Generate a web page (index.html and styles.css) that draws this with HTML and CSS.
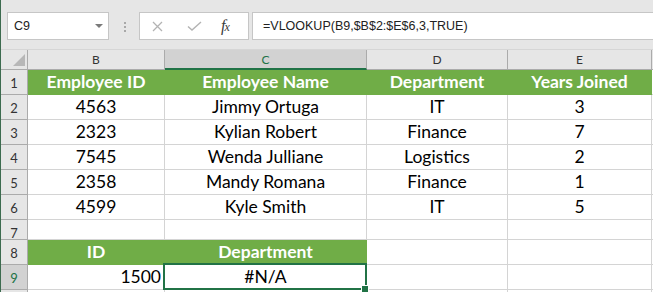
FILE: index.html
```html
<!DOCTYPE html>
<html lang="en">
<head>
<meta charset="utf-8">
<title>Employee lookup</title>
<link rel="stylesheet" href="styles.css">
</head>
<body>
<div class="app">
  <div class="topbar">
    <div class="namebox"><span>C9</span><span class="caret"></span></div>
    <div class="grip"></div>
    <div class="fbuttons">
      <svg class="ico-x" width="11" height="11" viewBox="0 0 11 11"><path d="M1 1L10 10M10 1L1 10" stroke="#b3b3b3" stroke-width="1.3" fill="none"/></svg>
      <svg class="ico-ok" width="15" height="10" viewBox="0 0 15 10"><path d="M1 5.5L5 9L14 1" stroke="#b3b3b3" stroke-width="1.4" fill="none"/></svg>
      <span class="fx"><i>f</i><i class="x">x</i></span>
    </div>
    <div class="finput">=VLOOKUP(B9,$B$2:$E$6,3,TRUE)</div>
  </div>

  <div class="sheet">
    <div class="corner"><svg width="26" height="19" viewBox="0 0 26 19"><path d="M24 4V16H12Z" fill="#b7b7b7"/></svg></div>
    <div class="ch">B</div><div class="ch sel">C</div><div class="ch">D</div><div class="ch">E</div><div class="ch edge"></div>

    <div class="rh">1</div>
    <div class="c head">Employee ID</div><div class="c head">Employee Name</div><div class="c head">Department</div><div class="c head">Years Joined</div><div class="c edge"></div>

    <div class="rh">2</div>
    <div class="c">4563</div><div class="c">Jimmy Ortuga</div><div class="c">IT</div><div class="c">3</div><div class="c edge"></div>

    <div class="rh">3</div>
    <div class="c">2323</div><div class="c">Kylian Robert</div><div class="c">Finance</div><div class="c">7</div><div class="c edge"></div>

    <div class="rh">4</div>
    <div class="c">7545</div><div class="c">Wenda Julliane</div><div class="c">Logistics</div><div class="c">2</div><div class="c edge"></div>

    <div class="rh">5</div>
    <div class="c">2358</div><div class="c">Mandy Romana</div><div class="c">Finance</div><div class="c">1</div><div class="c edge"></div>

    <div class="rh">6</div>
    <div class="c">4599</div><div class="c">Kyle Smith</div><div class="c">IT</div><div class="c">5</div><div class="c edge"></div>

    <div class="rh">7</div>
    <div class="c"></div><div class="c"></div><div class="c"></div><div class="c"></div><div class="c edge"></div>

    <div class="rh">8</div>
    <div class="c head">ID</div><div class="c head">Department</div><div class="c"></div><div class="c"></div><div class="c edge"></div>

    <div class="rh sel">9</div>
    <div class="c num">1500</div><div class="c active">#N/A</div><div class="c"></div><div class="c"></div><div class="c edge"></div>

    <div class="rh"></div>
    <div class="c"></div><div class="c"></div><div class="c"></div><div class="c"></div><div class="c edge"></div>
  </div>
</div>
</body>
</html>
```

FILE: styles.css
```css
html, body {
  margin: 0;
  padding: 0;
}

body {
  width: 653px;
  height: 292px;
  overflow: hidden;
  background: #ffffff;
}

.app {
  height: 292px;
  border-left: 1px solid #3d6b4f;
  overflow: hidden;
}

/* ---------- formula bar ---------- */
.topbar {
  height: 50px;
  box-sizing: border-box;
  background: #e6e6e6;
  border-bottom: 1px solid #d6d6d6;
  display: flex;
  align-items: flex-start;
  padding: 12px 0 0 6px;
  overflow: hidden;
  font-family: "Liberation Sans", Arial, sans-serif;
  font-size: 12.5px;
  color: #222222;
}

.namebox {
  flex: 0 0 102px;
  height: 28px;
  box-sizing: border-box;
  background: #ffffff;
  border: 1px solid #c6c6c6;
  display: flex;
  align-items: center;
  padding: 0 5px 0 6px;
}

.caret {
  margin-left: auto;
  width: 0;
  height: 0;
  border-left: 4px solid transparent;
  border-right: 4px solid transparent;
  border-top: 4px solid #7a7a7a;
}

.grip {
  flex: 0 0 2px;
  height: 10px;
  margin: 10px 0 0 15px;
  background: repeating-linear-gradient(#a8a8a8 0 2px, transparent 2px 4px);
}

.fbuttons {
  flex: 0 0 110px;
  height: 28px;
  box-sizing: border-box;
  margin-left: 13px;
  background: #ffffff;
  border: 1px solid #c6c6c6;
  display: flex;
  align-items: center;
  padding-left: 12px;
}

.ico-ok {
  margin-left: 24px;
}

.fx {
  margin-left: 19px;
  font-family: "Liberation Serif", "Times New Roman", serif;
  color: #3a3a3a;
  font-size: 16px;
  letter-spacing: -1px;
}

.fx .x {
  font-size: 12px;
}

.finput {
  flex: 0 0 420px;
  height: 28px;
  box-sizing: border-box;
  margin-left: 3px;
  background: #ffffff;
  border: 1px solid #c6c6c6;
  border-right: none;
  display: flex;
  align-items: center;
  padding-left: 10px;
}

/* ---------- worksheet grid ---------- */
.sheet {
  display: grid;
  grid-template-columns: 27px 137px 202px 141px 144px 1fr;
  grid-template-rows: 20px repeat(6, 25px) 20px 25px 25px 25px;
  font-family: Lato, "Liberation Sans", sans-serif;
}

.corner,
.ch,
.rh {
  background: #e6e6e6;
  box-sizing: border-box;
  border-right: 1px solid #ababab;
  border-bottom: 1px solid #ababab;
}

.ch {
  font-size: 12px;
  line-height: 19px;
  text-align: center;
  color: #333333;
}

.ch.sel {
  background: #d2d2d2;
  color: #217346;
  border-bottom: 2px solid #217346;
}

.ch.edge {
  border-right: none;
}

.corner svg {
  display: block;
}

.rh {
  font-size: 13px;
  line-height: 26px;
  text-align: center;
  color: #333333;
}

.rh.sel {
  background: #d2d2d2;
  color: #217346;
}

.c {
  box-sizing: border-box;
  border-right: 1px solid #d4d4d4;
  border-bottom: 1px solid #d4d4d4;
  font-size: 17.5px;
  line-height: 24px;
  text-align: center;
  color: #000000;
  white-space: nowrap;
}

.c.edge {
  border-right: none;
}

.c.head {
  background: #70ad47;
  border-color: #70ad47;
  color: #ffffff;
  font-weight: 700;
}

.c.num {
  text-align: right;
  padding-right: 3px;
}

/* selected cell frame with fill handle */
.c.active {
  position: relative;
}

.c.active::before {
  content: "";
  position: absolute;
  top: -2px;
  left: -2px;
  right: -1px;
  bottom: -1px;
  border: 2px solid #217346;
}

.c.active::after {
  content: "";
  position: absolute;
  right: -2px;
  bottom: -3px;
  width: 6px;
  height: 6px;
  background: #217346;
  box-shadow: 0 0 0 1px #ffffff;
}
```
